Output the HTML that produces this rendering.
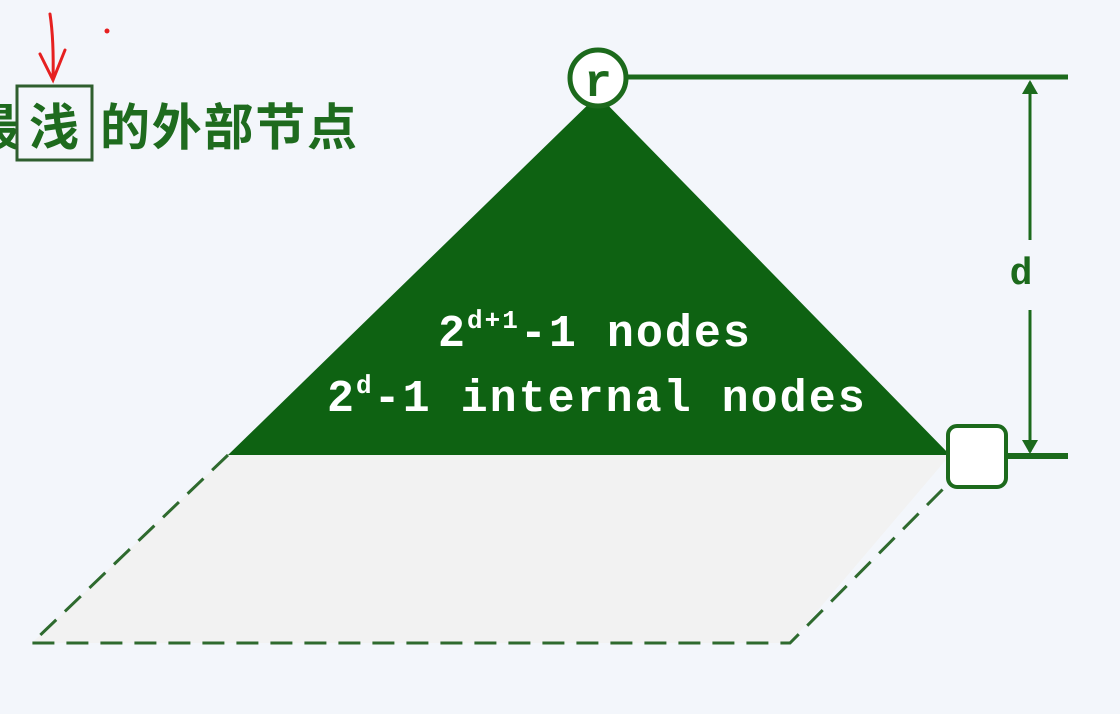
<!DOCTYPE html>
<html><head><style>
html,body{margin:0;padding:0;background:#f3f6fb;}
body{width:1120px;height:714px;overflow:hidden;position:relative;}
</style></head><body>
<svg width="1120" height="714" viewBox="0 0 1120 714" xmlns="http://www.w3.org/2000/svg" style="position:absolute;left:0;top:0">
<rect width="1120" height="714" fill="#f3f6fb"/>
<polygon points="228,455 950,455 790,643 32,643" fill="#f2f2f2"/>
<path d="M228,455 L32,643 L790,643 L950,482" fill="none" stroke="#2e6a2e" stroke-width="3" stroke-dasharray="22,12"/>
<polygon points="598,95 228,455 950,455" fill="#0e6212"/>
<line x1="626" y1="77" x2="1068" y2="77" stroke="#1c6a1c" stroke-width="5"/>
<line x1="1005" y1="456" x2="1068" y2="456" stroke="#1c6a1c" stroke-width="6"/>
<line x1="1030" y1="82" x2="1030" y2="240" stroke="#1c6a1c" stroke-width="3"/>
<line x1="1030" y1="310" x2="1030" y2="452" stroke="#1c6a1c" stroke-width="3"/>
<path d="M1022,94 L1030,80 L1038,94 Z" fill="#1c6a1c"/>
<path d="M1022,440 L1030,454 L1038,440 Z" fill="#1c6a1c"/>
<text x="1021" y="284" font-family="Liberation Mono, monospace" font-weight="bold" font-size="38" fill="#1c6a1c" text-anchor="middle">d</text>
<circle cx="598" cy="78" r="28" fill="#fff" stroke="#1c6a1c" stroke-width="5"/>
<text x="598" y="96" font-family="Liberation Mono, monospace" font-weight="bold" font-size="46" fill="#1c6a1c" text-anchor="middle">r</text>
<rect x="948" y="426" width="58" height="61" rx="9" fill="#fff" stroke="#1c6a1c" stroke-width="4"/>
<text x="438" y="346" font-family="Liberation Mono, monospace" font-weight="bold" font-size="45" fill="#fff" letter-spacing="2">2<tspan font-size="26" dy="-18">d+1</tspan><tspan dy="18">-1 nodes</tspan></text>
<text x="327" y="411" font-family="Liberation Mono, monospace" font-weight="bold" font-size="45" fill="#fff" letter-spacing="2">2<tspan font-size="26" dy="-18">d</tspan><tspan dy="18">-1 internal nodes</tspan></text>
<text x="-30" y="145" font-family="Liberation Sans, Noto Sans CJK SC, sans-serif" font-weight="bold" font-size="50" fill="#1e6b1e">最</text>
<text x="29" y="145" font-family="Liberation Sans, Noto Sans CJK SC, sans-serif" font-weight="bold" font-size="50" fill="#1e6b1e">浅</text>
<text x="100" y="145" font-family="Liberation Sans, Noto Sans CJK SC, sans-serif" font-weight="bold" font-size="50" fill="#1e6b1e" textLength="257" lengthAdjust="spacing">的外部节点</text>
<rect x="17" y="86" width="75" height="74" fill="none" stroke="#2e5e2e" stroke-width="3"/>
<path d="M50,14 Q54,40 53,80 M40,54 L53,80 L65,50" fill="none" stroke="#e62020" stroke-width="3" stroke-linecap="round"/>
<circle cx="107" cy="31" r="2.5" fill="#e62020"/>
</svg>
</body></html>
